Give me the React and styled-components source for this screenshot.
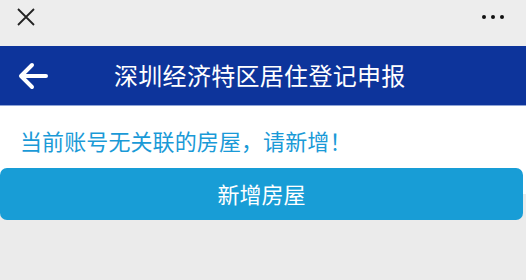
import React from 'react';
import styled, { createGlobalStyle } from 'styled-components';

const GlobalStyle = createGlobalStyle`
  html, body {
    margin: 0;
    padding: 0;
    background: #ebebeb;
    font-family: "Noto Sans CJK SC", "Noto Sans", sans-serif;
  }
`;

const Page = styled.div`
  width: 526px;
  height: 280px;
  display: flex;
  flex-direction: column;
  background: #ebebeb;
  overflow: hidden;
`;

const TopBar = styled.div`
  height: 46px;
  display: flex;
  align-items: center;
  justify-content: space-between;
  padding: 0 20px 0 14px;
  background: #ededed;
`;

const IconButton = styled.div`
  width: 24px;
  height: 24px;
  display: flex;
  align-items: center;
  justify-content: center;
  margin-top: -12px;
`;

const Dots = styled.div`
  display: flex;
  gap: 5px;
  margin-top: -12px;
  margin-right: 2px;
`;

const Dot = styled.span`
  width: 4px;
  height: 4px;
  border-radius: 50%;
  background: #111;
`;

const Header = styled.div`
  height: 60px;
  display: flex;
  align-items: center;
  background: #0d349b;
  border-bottom: 1px solid #8fa4d6;
  box-sizing: border-box;
`;

const Back = styled.div`
  width: 30px;
  height: 28px;
  margin-left: 18px;
  display: flex;
  align-items: center;
`;

const Title = styled.h1`
  flex: 1;
  margin: 0 0 2px 66px;
  font-size: 24px;
  font-weight: 400;
  color: #ffffff;
  letter-spacing: 0.3px;
`;

const Body = styled.div`
  background: #ffffff;
  padding: 20px 0 0;
  display: flex;
  flex-direction: column;
`;

const Message = styled.p`
  margin: 0 0 13px 20px;
  font-size: 22px;
  line-height: 29px;
  color: #1a9ad7;
  letter-spacing: 0.1px;
`;

const ButtonRow = styled.div`
  background: linear-gradient(#ffffff 50%, #ebebeb 50%);
`;

const AddButton = styled.button`
  display: block;
  width: 523px;
  height: 52px;
  border: none;
  border-radius: 7px;
  background: #189dd6;
  color: #ffffff;
  font-family: inherit;
  font-size: 22px;
  padding: 0 0 2px;
  cursor: pointer;
`;

const Rest = styled.div`
  flex: 1;
  background: #ebebeb;
`;

export default function App() {
  return (
    <>
      <GlobalStyle />
      <Page>
        <TopBar>
          <IconButton>
            <svg width="20" height="20" viewBox="0 0 20 20">
              <path d="M2 2 L18 18 M18 2 L2 18" stroke="#222" strokeWidth="1.8" fill="none" />
            </svg>
          </IconButton>
          <Dots>
            <Dot />
            <Dot />
            <Dot />
          </Dots>
        </TopBar>
        <Header>
          <Back>
            <svg width="30" height="28" viewBox="0 0 30 28">
              <path
                d="M28 14 H4 M14 3 L3 14 L14 25"
                stroke="#ffffff"
                strokeWidth="4"
                strokeLinecap="round"
                strokeLinejoin="round"
                fill="none"
              />
            </svg>
          </Back>
          <Title>深圳经济特区居住登记申报</Title>
        </Header>
        <Body>
          <Message>当前账号无关联的房屋，请新增！</Message>
        </Body>
        <ButtonRow>
          <AddButton>新增房屋</AddButton>
        </ButtonRow>
        <Rest />
      </Page>
    </>
  );
}
